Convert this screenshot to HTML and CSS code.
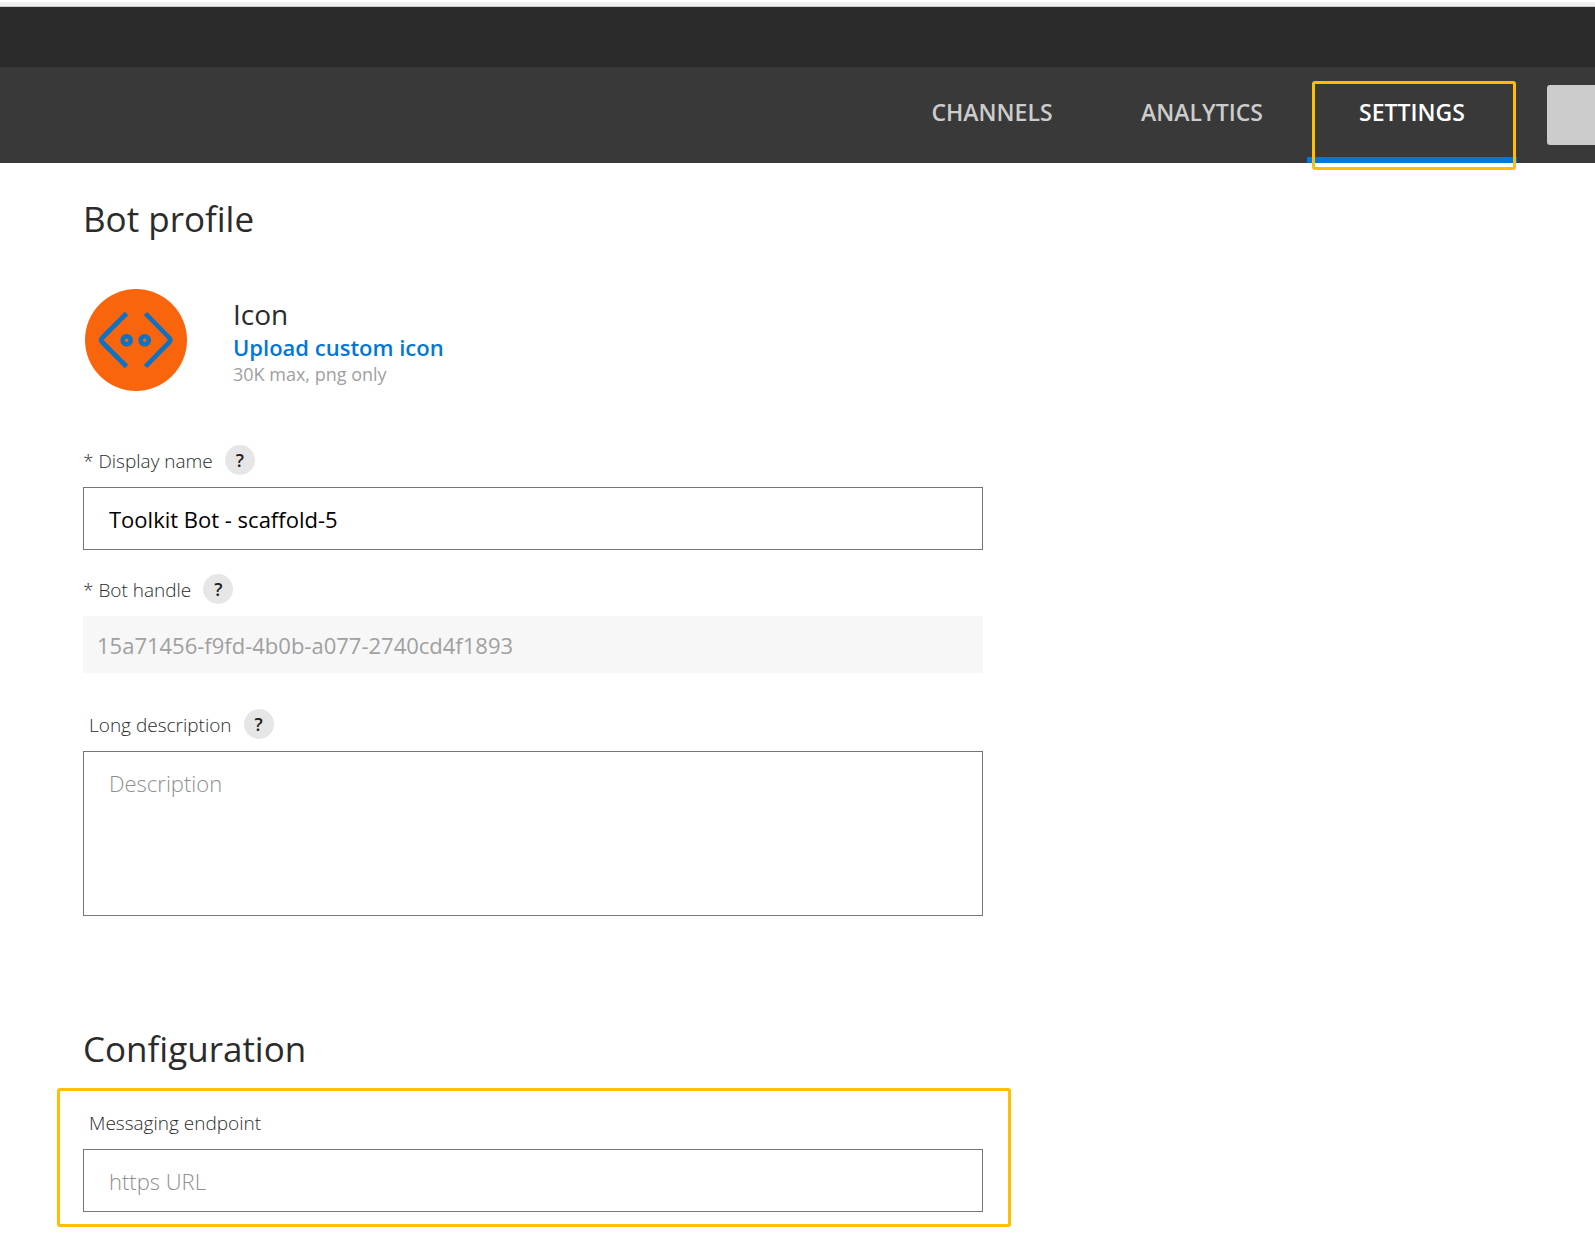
FILE: index.html
```html
<!DOCTYPE html>
<html lang="en">
<head>
<meta charset="utf-8">
<meta name="viewport" content="width=device-width, initial-scale=1">
<title>Bot settings</title>
<link rel="stylesheet" href="styles.css">
</head>
<body>
<header>
  <div class="edge"></div>
  <div class="topbar"></div>
  <div class="navbar">
    <nav class="tabs">
      <a class="tab" href="#channels">CHANNELS</a>
      <a class="tab" href="#analytics">ANALYTICS</a>
      <a class="tab tab-active" href="#settings" aria-current="page">SETTINGS</a>
    </nav>
    <button class="test" type="button" aria-label="Test"></button>
  </div>
</header>
<main>
  <form class="form">
    <section class="section">
      <h1 class="title">Bot profile</h1>
      <div class="profile">
        <svg class="avatar" viewBox="0 0 102 102" aria-hidden="true">
          <circle cx="51" cy="51" r="51" fill="#f8650c"/>
          <g fill="none" stroke="#0b72c4" stroke-width="4.600">
            <path d="M41.500 24.500L17.500 48.500Q15 51 17.500 53.500L41.500 77.500"/>
            <path d="M60.500 24.500L84 48.500Q86.500 51 84 53.500L60.500 77.500"/>
            <circle cx="41.700" cy="51.300" r="4"/>
            <circle cx="59.700" cy="51.300" r="4"/>
          </g>
        </svg>
        <div class="upload">
          <h2 class="upload-title">Icon</h2>
          <a class="upload-link" href="#upload">Upload custom icon</a>
          <p class="upload-note">30K max, png only</p>
        </div>
      </div>
      <div class="field">
        <div class="label-row">
          <label class="label" for="name">* Display name</label>
          <button class="help" type="button">?</button>
        </div>
        <input class="box" id="name" type="text" value="Toolkit Bot - scaffold-5">
      </div>
      <div class="field">
        <div class="label-row">
          <label class="label" for="handle">* Bot handle</label>
          <button class="help" type="button">?</button>
        </div>
        <input class="box box-disabled" id="handle" type="text" value="15a71456-f9fd-4b0b-a077-2740cd4f1893" disabled>
      </div>
      <div class="field field-long">
        <div class="label-row">
          <label class="label label-optional" for="desc">Long description</label>
          <button class="help" type="button">?</button>
        </div>
        <textarea class="box box-long" id="desc" placeholder="Description"></textarea>
      </div>
    </section>
    <section>
      <h1 class="title title-config">Configuration</h1>
      <div class="field highlight">
        <div class="label-row">
          <label class="label label-optional" for="endpoint">Messaging endpoint</label>
        </div>
        <input class="box" id="endpoint" type="text" placeholder="https URL">
      </div>
    </section>
  </form>
</main>
</body>
</html>
```
FILE: styles.css
```css
* {
  box-sizing: border-box;
}

body {
  margin: 0;
  background: #fff;
  color: #2b2b2b;
  font-family: "Open Sans", "Noto Sans", sans-serif;
}

h1, h2, p {
  margin: 0;
  font-weight: 400;
}

.edge {
  height: 7px;
  border-top: 2px solid #fff;
  border-bottom: 1px solid #ccc;
  background: #f0f0f0;
}

.topbar {
  height: 60px;
  background: #2b2b2b;
}

.navbar {
  display: flex;
  justify-content: flex-end;
  gap: 30px;
  height: 96px;
  background: #393939;
}

.tabs {
  display: flex;
}

.tab {
  position: relative;
  width: 210px;
  padding-top: 29px;
  border-bottom: 6px solid transparent;
  color: #ccc;
  font-size: 23px;
  font-weight: 600;
  line-height: 32px;
  text-align: center;
  text-decoration: none;
}

.tab-active {
  border-color: #0078d7;
  color: #fff;
}

/* Callout frame drawn over the active tab */
.tab-active::after {
  content: "";
  position: absolute;
  inset: 14px 1px -13px 5px;
  border: 3px solid #ffbf00;
  border-radius: 3px;
}

.test {
  width: 48px;
  height: 60px;
  margin-top: 18px;
  border: 0;
  border-radius: 3px 0 0 3px;
  background: #ccc;
}

main {
  padding: 32px 57px 9px;
}

.form {
  max-width: 954px;
}

.section {
  padding: 0 28px 0 26px;
}

.title {
  font-size: 35px;
  line-height: 48px;
}

.profile {
  display: flex;
  align-items: center;
  gap: 46px;
  margin: 46px 0 54px;
  padding-left: 2px;
}

.avatar {
  width: 102px;
  height: 102px;
}

.upload {
  padding-top: 2px;
}

.upload-title {
  font-size: 28px;
  line-height: 36px;
}

.upload-link {
  display: block;
  color: #0078d7;
  font-size: 22px;
  font-weight: 600;
  line-height: 30px;
  text-decoration: none;
}

.upload-note {
  color: #a0a0a0;
  font-size: 18px;
  line-height: 24px;
}

.field {
  display: flex;
  flex-direction: column;
  gap: 12px;
  margin-bottom: 24px;
}

.field-long {
  margin: 36px 0 109px;
}

.label-row {
  display: flex;
  align-items: center;
  gap: 12px;
  height: 30px;
}

.label {
  padding-top: 2px;
  font-size: 19px;
  font-weight: 300;
}

.label-optional {
  padding-left: 6px;
}

.help {
  width: 30px;
  height: 30px;
  padding: 0;
  border: 0;
  border-radius: 50%;
  background: #e6e6e6;
  color: #222;
  font: 600 18px/30px "Open Sans", sans-serif;
}

.box {
  display: block;
  width: 100%;
  height: 63px;
  padding: 0 25px;
  border: 1px solid #767676;
  border-radius: 0;
  background: #fff;
  color: #000;
  font: 400 22px/30px "Open Sans", sans-serif;
}

.box::placeholder {
  color: #8f8f8f;
  font-weight: 300;
  opacity: 1;
}

.box-disabled {
  height: 57px;
  padding: 0 14px;
  border: 0;
  background: #f7f7f7;
  color: #a0a0a0;
}

.box-long {
  height: 165px;
  padding-top: 16px;
  resize: none;
}

.title-config {
  margin-bottom: 15px;
  padding-left: 26px;
}

.highlight {
  margin: 0;
  padding: 16px 25px 12px 23px;
  border: 3px solid #ffbf00;
  border-radius: 3px;
}
```
